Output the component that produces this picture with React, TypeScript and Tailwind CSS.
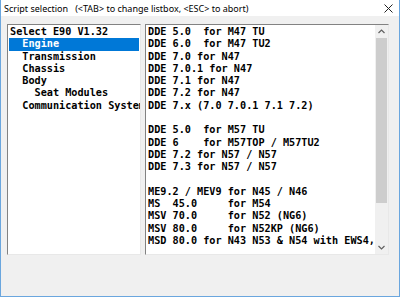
import React from 'react'

const mono = { fontFamily: '"DejaVu Sans Mono", "Liberation Mono", monospace' }

const leftItems = [
  'Select E90 V1.32',
  '  Engine',
  '  Transmission',
  '  Chassis',
  '  Body',
  '    Seat Modules',
  '  Communication System',
]

const rightItems = [
  'DDE 5.0  for M47 TU',
  'DDE 6.0  for M47 TU2',
  'DDE 7.0 for N47',
  'DDE 7.0.1 for N47',
  'DDE 7.1 for N47',
  'DDE 7.2 for N47',
  'DDE 7.x (7.0 7.0.1 7.1 7.2)',
  '',
  'DDE 5.0  for M57 TU',
  'DDE 6    for M57TOP / M57TU2',
  'DDE 7.2 for N57 / N57',
  'DDE 7.3 for N57 / N57',
  '',
  'ME9.2 / MEV9 for N45 / N46',
  'MS  45.0     for M54',
  'MSV 70.0     for N52 (NG6)',
  'MSV 80.0     for N52KP (NG6)',
  'MSD 80.0 for N43 N53 & N54 with EWS4,',
]

function Chevron({ up }: { up?: boolean }) {
  return (
    <svg width="7" height="5" viewBox="0 0 7 5" className="block">
      <path
        d={up ? 'M0.5 4 L3.5 1 L6.5 4' : 'M0.5 1 L3.5 4 L6.5 1'}
        fill="none"
        stroke="#606060"
        strokeWidth="1.2"
      />
    </svg>
  )
}

export default function App() {
  return (
    <div className="w-[400px] h-[297px] bg-[#f0f0f0] border-x border-b border-[#6aa6de] flex flex-col overflow-hidden">
      {/* title bar */}
      <div className="h-4 bg-white flex items-center justify-between pl-[3px] pr-[6px] shrink-0">
        <span
          className="text-[9px] text-black whitespace-pre leading-none"
          style={{ fontFamily: '"Noto Sans", "Liberation Sans", sans-serif' }}
        >
          {'Script selection   (<TAB> to change listbox, <ESC> to abort)'}
        </span>
        <svg width="9" height="9" viewBox="0 0 9 9" className="block">
          <path d="M0.5 0.5 L8.5 8.5 M8.5 0.5 L0.5 8.5" stroke="#222" strokeWidth="1" />
        </svg>
      </div>

      <div className="flex gap-[4px] pl-[6px] pt-2">
        {/* left listbox */}
        <div className="w-[134px] h-[231px] bg-white border-t border-l border-[#828282] border-r border-b border-r-[#e8e8e8] border-b-[#e8e8e8] p-[1px] overflow-hidden">
          {leftItems.map((item, i) => (
            <div
              key={i}
              className={`h-[12.3px] leading-[12.3px] text-[10.2px] font-bold whitespace-pre pl-[1px] ${
                i === 1 ? 'bg-[#0078d7] text-white' : 'text-black'
              }`}
              style={mono}
            >
              {item}
            </div>
          ))}
        </div>

        {/* right listbox */}
        <div className="w-[244px] h-[231px] bg-white border-t border-l border-[#828282] border-r border-b border-r-[#e8e8e8] border-b-[#e8e8e8] flex">
          <div className="flex-1 overflow-hidden p-[1px] pl-[2px]">
            {rightItems.map((item, i) => (
              <div
                key={i}
                className="h-[12.3px] leading-[12.3px] text-[10.2px] font-bold whitespace-pre text-black"
                style={mono}
              >
                {item}
              </div>
            ))}
          </div>
          <div className="w-[13px] bg-[#f0f0f0] flex flex-col items-center">
            <div className="h-[13px] flex items-center justify-center">
              <Chevron up />
            </div>
            <div className="w-[11px] h-[165px] bg-[#cdcdcd]" />
            <div className="flex-1" />
            <div className="h-[13px] flex items-center justify-center">
              <Chevron />
            </div>
          </div>
        </div>
      </div>
    </div>
  )
}
